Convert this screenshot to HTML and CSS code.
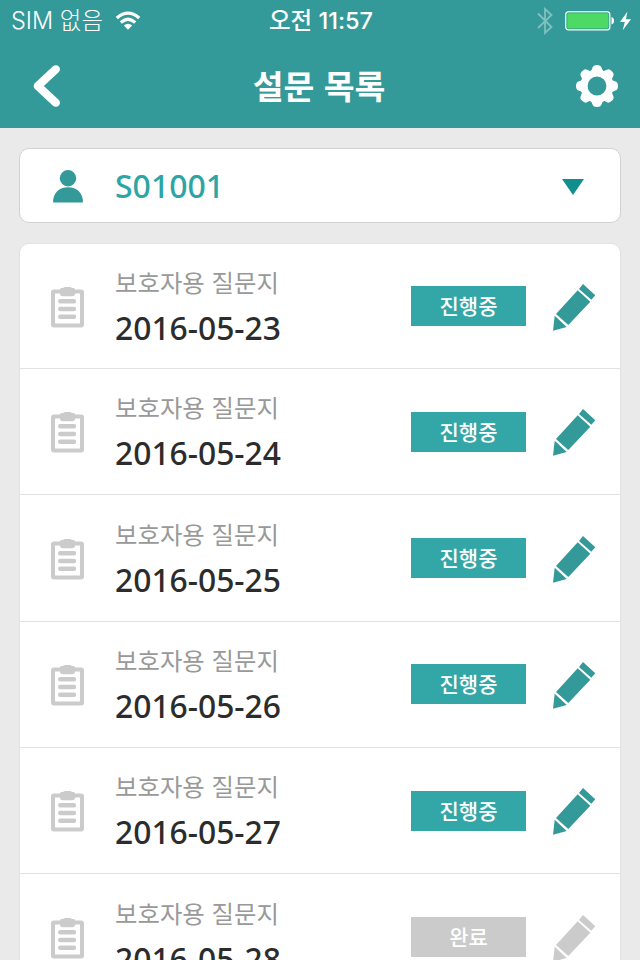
FILE: index.html
```
<!DOCTYPE html>
<html lang="ko">
<head>
<meta charset="utf-8">
<title>설문 목록</title>
<link rel="stylesheet" href="styles.css">
</head>
<body>
<svg class="defs" aria-hidden="true">
  <symbol id="clipboard" viewBox="0 0 33 41">
    <rect x="2" y="4.500" width="29" height="34" rx="1" fill="none" stroke="currentColor" stroke-width="4"/>
    <path fill="currentColor" d="M9 2.5Q9 1 10.5 1H12Q13 0 14.5 0H18.5Q20 0 21 1H22.500Q24 1 24 2.500V6.500Q24 9.300 21 9.300H12Q9 9.300 9 6.500Z"/>
    <path d="M9.200 14.200H23M9.200 22H23M9.200 29.700H23" fill="none" stroke="currentColor" stroke-width="4.400" stroke-linecap="round"/>
  </symbol>
  <symbol id="pencil" viewBox="0 0 43 47">
    <path fill="currentColor" d="M30 0L42.300 11.300L38.300 15.700L26 5ZM24.700 6.300L37.300 17.700L15.300 41L3 30ZM1.700 31.700L13.700 43L0 46.700Z"/>
  </symbol>
</svg>
<header class="top">
  <div class="status">
    <div class="carrier"><span>SIM 없음</span>
      <svg class="wifi" viewBox="0 0 26 19"><g fill="none" stroke="#fff" stroke-width="3.300"><path d="M1.800 7Q13-2.800 24.200 7"/><path d="M5.800 11.400Q13 5 20.200 11.400"/></g><path fill="#fff" d="M8.800 14.500Q13 11 17.200 14.500L13 18.700Z"/></svg>
    </div>
    <div class="clock">오전 11:57</div>
    <div class="power">
      <svg class="bluetooth" viewBox="0 0 16 28"><path d="M1 6.500L14.500 20L8 26V2L14.500 8L1 21" fill="none" stroke="#82c0c0" stroke-width="1.800"/></svg>
      <svg class="battery" viewBox="0 0 50 20"><rect x=".8" y=".8" width="44" height="18" rx="2.500" fill="#4cd964" stroke="#fff" stroke-width="1.300"/><rect x="1.900" y="1.900" width="41.800" height="15.800" rx="1.500" fill="none" stroke="#339999" stroke-width=".7"/><path fill="#fff" d="M46.500 6Q49 6.500 49 9.700T46.500 13.500Z"/></svg>
      <svg class="bolt" viewBox="0 0 12 20"><path fill="#fff" d="M8 0L0 11H5.200L3 20L12 8H6.500Z"/></svg>
    </div>
  </div>
  <div class="titlebar">
    <svg class="back" viewBox="0 0 28 44"><path d="M22.800 5.300L4.800 22L22.800 38.700" fill="none" stroke="#fff" stroke-width="8.300" stroke-linecap="round" stroke-linejoin="round"/></svg>
    <h1>설문 목록</h1>
    <svg class="gear" viewBox="-21 -21 42 42">
      <circle r="13" fill="none" stroke="#fff" stroke-width="7.200"/>
      <g fill="#fff"><path id="tooth" d="M-7-14Q-5.200-15.500-4.500-18.500Q-3.700-21 0-21T4.500-18.500Q5.200-15.500 7-14L5-12H-5Z"/>
      <use href="#tooth" transform="rotate(45)"/><use href="#tooth" transform="rotate(90)"/><use href="#tooth" transform="rotate(135)"/><use href="#tooth" transform="rotate(180)"/><use href="#tooth" transform="rotate(225)"/><use href="#tooth" transform="rotate(270)"/><use href="#tooth" transform="rotate(315)"/></g>
    </svg>
  </div>
</header>
<main>
  <div class="selector">
    <svg class="person" viewBox="0 0 30 33"><circle cx="15" cy="8.300" r="8.200" fill="#339999"/><path fill="#339999" d="M0 32.500C0 23 6 17.300 15 17.300S30 23 30 32.500Z"/></svg>
    <span class="code">S01001</span>
    <svg class="arrow" viewBox="0 0 22 16"><path fill="#118f8f" d="M0 0H22L11 16Z"/></svg>
  </div>
  <ul class="list">
    <li><svg class="clip"><use href="#clipboard"/></svg><div class="info"><span class="kind">보호자용 질문지</span><span class="date">2016-05-23</span></div><span class="tag">진행중</span><svg class="pen"><use href="#pencil"/></svg></li>
    <li><svg class="clip"><use href="#clipboard"/></svg><div class="info"><span class="kind">보호자용 질문지</span><span class="date">2016-05-24</span></div><span class="tag">진행중</span><svg class="pen"><use href="#pencil"/></svg></li>
    <li><svg class="clip"><use href="#clipboard"/></svg><div class="info"><span class="kind">보호자용 질문지</span><span class="date">2016-05-25</span></div><span class="tag">진행중</span><svg class="pen"><use href="#pencil"/></svg></li>
    <li><svg class="clip"><use href="#clipboard"/></svg><div class="info"><span class="kind">보호자용 질문지</span><span class="date">2016-05-26</span></div><span class="tag">진행중</span><svg class="pen"><use href="#pencil"/></svg></li>
    <li><svg class="clip"><use href="#clipboard"/></svg><div class="info"><span class="kind">보호자용 질문지</span><span class="date">2016-05-27</span></div><span class="tag">진행중</span><svg class="pen"><use href="#pencil"/></svg></li>
    <li class="done"><svg class="clip"><use href="#clipboard"/></svg><div class="info"><span class="kind">보호자용 질문지</span><span class="date">2016-05-28</span></div><span class="tag">완료</span><svg class="pen"><use href="#pencil"/></svg></li>
  </ul>
</main>
</body>
</html>
```

FILE: styles.css
```
* { box-sizing: border-box; }
body { margin: 0; height: 960px; overflow: hidden; background: #eaeaea; font-family: "Noto Sans", "Noto Sans CJK KR", sans-serif; }
svg { display: block; flex: none; }
.defs { position: absolute; width: 0; height: 0; }
.top { height: 128px; background: #339999; color: #fff; }
.status { display: grid; grid-template-columns: 1fr auto 1fr; align-items: center; height: 42px; padding: 0 9px 0 11px; font-family: Inter, "Noto Sans CJK KR", sans-serif; font-size: 23px; line-height: 40px; }
.carrier { display: flex; align-items: center; gap: 12px; font-weight: 300; font-size: 23.500px; white-space: nowrap; }
.wifi { width: 26px; height: 19px; margin-top: -2px; }
.clock { font-weight: 500; font-size: 23.500px; }
.power { display: flex; align-items: center; justify-content: flex-end; }
.bluetooth { width: 16px; height: 28px; margin-right: 12px; }
.battery { width: 50px; height: 20px; margin: -1px 5px 0 0; }
.bolt { width: 11px; height: 20px; margin-top: -1px; }
.titlebar { display: flex; align-items: center; justify-content: space-between; height: 86px; padding: 1px 22px 0 33px; }
.back { width: 28px; height: 44px; }
h1 { margin: -2px 0 0 1px; font: 700 33.500px/50px "Noto Sans CJK KR", sans-serif; }
.gear { width: 42px; height: 42px; }
main { padding: 20px 19px 0; }
.selector { display: flex; align-items: center; height: 75px; padding: 0 36px 0 33px; border: 1px solid #d2d2d2; border-radius: 10px; background: #fff; }
.person { width: 30px; height: 33px; margin-top: 2px; }
.code { flex: 1; margin-left: 32px; color: #2ea5a5; font-size: 32px; font-weight: 500; line-height: 44px; }
.arrow { width: 22px; height: 16px; margin-top: 2px; }
.list { margin: 20px 0 0; padding: 0; list-style: none; border: 1px solid #e2e2e2; border-radius: 10px 10px 0 0; background: #fff; }
li { display: flex; align-items: center; height: 126.300px; padding: 0 24px 0 31px; border-bottom: 1px solid #e2e2e2; color: #339999; }
li:first-child { height: 125.200px; }
.clip { width: 33px; height: 41px; margin-top: 2px; color: #cbcbcb; }
.info { display: flex; flex: 1; flex-direction: column; margin-left: 31px; }
.kind { color: #999; font: 400 24.400px/40px "Noto Sans CJK KR", sans-serif; }
.date { margin-top: 3px; color: #2c2c2c; font-size: 31.800px; font-weight: 500; line-height: 46px; }
.tag { width: 115px; height: 40px; margin-right: 27px; background: #33a7a7; color: #fff; font: 500 21px/38px "Noto Sans CJK KR", sans-serif; text-align: center; }
.pen { width: 43px; height: 47px; margin-top: 2px; }
.done { color: #cbcbcb; }
.done .tag { background: #cbcbcb; }
```
